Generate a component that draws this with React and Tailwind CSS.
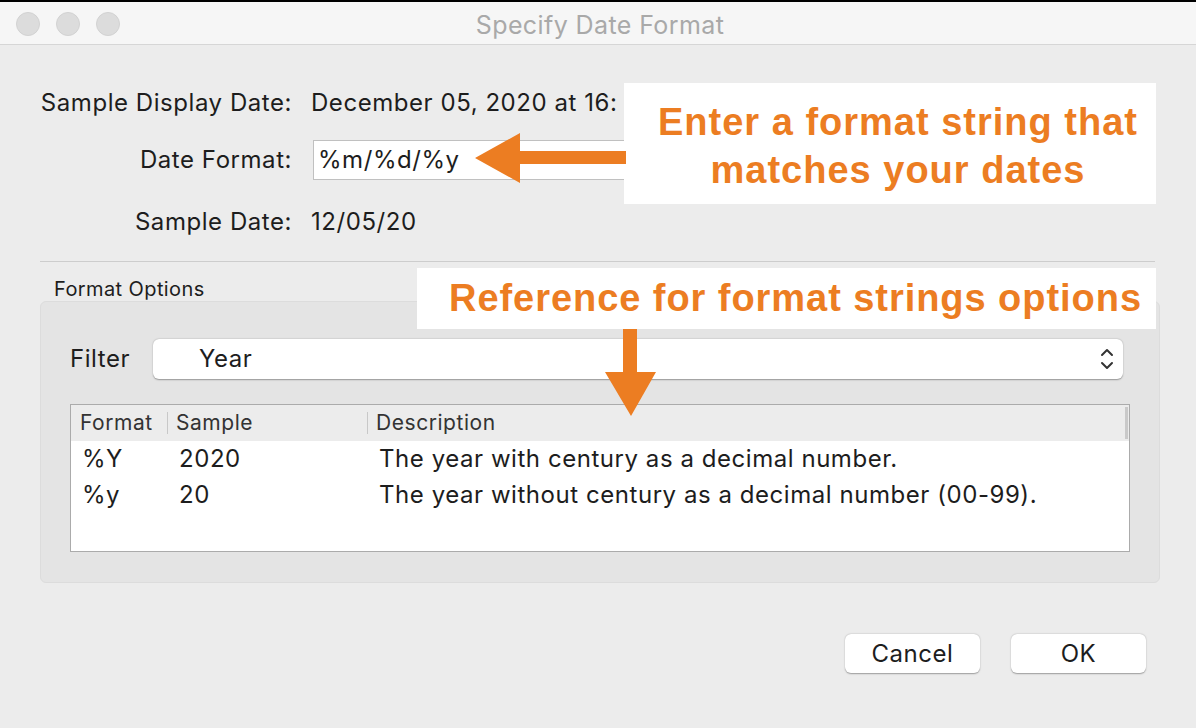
import React from "react";

function Chevrons() {
  return (
    <svg width="16" height="26" viewBox="0 0 16 26" fill="none" stroke="#333" strokeWidth="2" strokeLinecap="round" strokeLinejoin="round">
      <polyline points="3,9 8,4 13,9" />
      <polyline points="3,17 8,22 13,17" />
    </svg>
  );
}

export default function App() {
  const rows = [
    { fmt: "%Y", sample: "2020", desc: "The year with century as a decimal number." },
    { fmt: "%y", sample: "20", desc: "The year without century as a decimal number (00-99)." },
  ];

  return (
    <div className="relative w-[1196px] h-[728px] overflow-hidden bg-[#ececec] text-[#1d1d1d] tracking-[0.55px] font-['Inter','Liberation_Sans',sans-serif]">
      {/* Title bar */}
      <div className="relative flex items-center h-[45px] pt-[2px] bg-[#f6f6f6] border-t-2 border-black border-b border-b-[#d6d6d6]">
        <div className="flex items-center gap-[16px] pl-[16px]">
          <span className="w-[24px] h-[24px] rounded-full bg-[#dcdcdc] border border-[#d2d2d2]" />
          <span className="w-[24px] h-[24px] rounded-full bg-[#dcdcdc] border border-[#d2d2d2]" />
          <span className="w-[24px] h-[24px] rounded-full bg-[#dcdcdc] border border-[#d2d2d2]" />
        </div>
        <div className="flex-1 mt-[3px] text-center pr-[116px] text-[25px] tracking-[0.4px] text-[#a9a9a9]">Specify Date Format</div>
      </div>

      {/* Body */}
      <div className="px-[40px]">
        <div className="grid grid-cols-[252px_1fr] gap-x-[19px] items-center text-[24px] mt-[38px]">
          <div className="h-[40px] flex items-center justify-end whitespace-nowrap">Sample Display Date:</div>
          <div className="h-[40px] flex items-center whitespace-nowrap">December 05, 2020 at 16:</div>
          <div className="h-[40px] mt-[17px] flex items-center justify-end">Date Format:</div>
          <div className="h-[40px] mt-[17px] flex items-center">
            <div className="w-[340px] h-[40px] ml-[2px] bg-white border border-[#c0c0c0] flex items-center pl-[4px]">%m/%d/%y</div>
          </div>
          <div className="h-[40px] mt-[22px] flex items-center justify-end">Sample Date:</div>
          <div className="h-[40px] mt-[22px] flex items-center">12/05/20</div>
        </div>

        <div className="mt-[19px] w-[1115px] border-t border-[#cdcdcd]" />

        <div className="mt-[15px] pl-[14px] h-[23px] flex items-center text-[20px] tracking-[0.4px]">Format Options</div>

        <div className="mt-[1px] w-[1120px] h-[282px] bg-[#e4e4e4] border border-[#dcdcdc] rounded-md px-[29px] pt-[37px]">
          <div className="flex items-center">
            <div className="w-[83px] text-[24px]">Filter</div>
            <div className="flex-1 mr-[7px] h-[40px] bg-white rounded-md shadow-[0_0.5px_1.5px_rgba(0,0,0,0.35)] flex items-center justify-between pl-[46px] pr-[8px] text-[24px]">
              <span>Year</span>
              <Chevrons />
            </div>
          </div>

          <div className="mt-[25px] h-[148px] bg-white border border-[#ababab] overflow-hidden">
            <div className="relative flex items-center h-[36px] bg-[#ececec] text-[21px] text-[#333]">
              <div className="w-[96px] pl-[9px]">Format</div>
              <div className="w-[1px] h-[22px] bg-[#c8c8c8]" />
              <div className="w-[199px] pl-[8px]">Sample</div>
              <div className="w-[1px] h-[22px] bg-[#c8c8c8]" />
              <div className="flex-1 pl-[8px]">Description</div>
              <div className="w-[3px] h-[32px] mr-[1px] bg-[#c9c9c9]" />
            </div>
            {rows.map((r) => (
              <div key={r.fmt} className="flex items-center h-[36px] text-[24px]">
                <div className="w-[97px] pl-[11px]">{r.fmt}</div>
                <div className="w-[200px] pl-[11px]">{r.sample}</div>
                <div className="flex-1 pl-[11px]">{r.desc}</div>
              </div>
            ))}
          </div>
        </div>

        <div className="mt-[51px] flex justify-end gap-[31px] pr-[10px]">
          <button className="w-[135px] h-[39px] bg-white rounded-md shadow-[0_0.5px_1.5px_rgba(0,0,0,0.35)] text-[24px]">Cancel</button>
          <button className="w-[135px] h-[39px] bg-white rounded-md shadow-[0_0.5px_1.5px_rgba(0,0,0,0.35)] text-[24px]">OK</button>
        </div>
      </div>

      {/* Annotation 1 */}
      <div className="absolute left-[624px] top-[83px] w-[532px] h-[121px] pt-[4px] pl-[16px] bg-white flex flex-col items-center justify-center text-[#ec7d22] font-bold text-[38px] leading-[48px] tracking-[1px] font-['Liberation_Sans',Arial,sans-serif]">
        <div>Enter a format string that</div>
        <div>matches your dates</div>
      </div>
      <svg className="absolute left-[474px] top-[132px]" width="152" height="52" viewBox="0 0 152 52">
        <polygon points="1,26 46,1 46,19 152,19 152,32 46,32 46,51" fill="#ec7d22" />
      </svg>

      {/* Annotation 2 */}
      <div className="absolute left-[417px] top-[268px] w-[739px] h-[61px] bg-white flex items-center pl-[32px] text-[#ec7d22] font-bold text-[38px] tracking-[0.95px] font-['Liberation_Sans',Arial,sans-serif]">
        Reference for format strings options
      </div>
      <svg className="absolute left-[604px] top-[329px]" width="54" height="88" viewBox="0 0 54 88">
        <polygon points="19,0 33,0 33,43 52,43 27,87 1,43 19,43" fill="#ec7d22" />
      </svg>
    </div>
  );
}
